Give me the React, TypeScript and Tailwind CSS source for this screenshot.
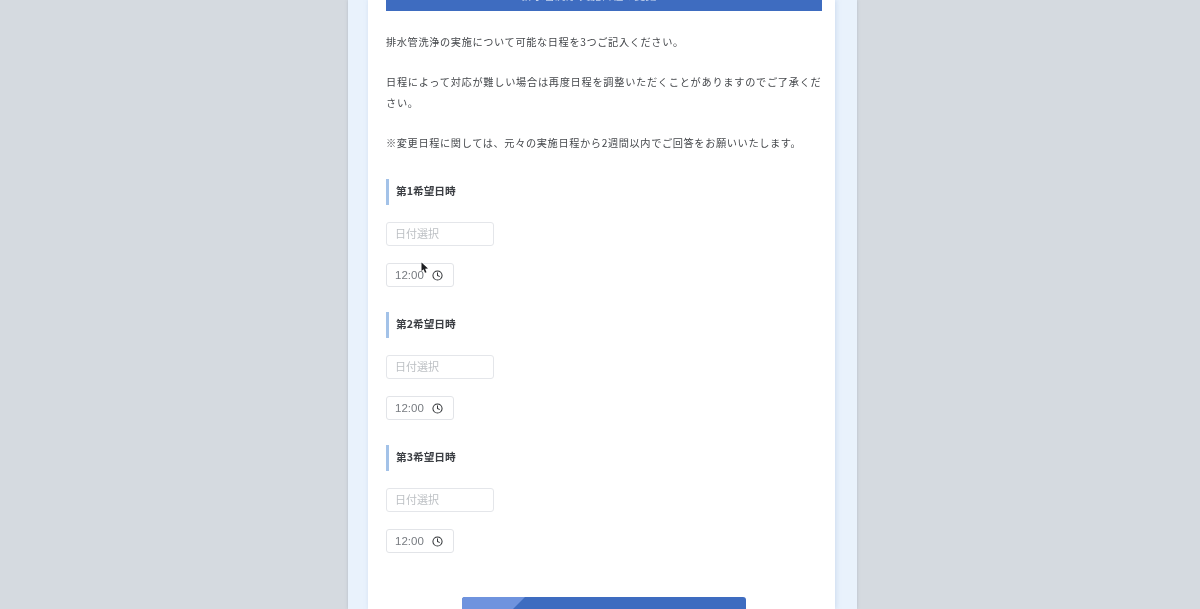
import { Clock } from "lucide-react";

const font = { fontFamily: '"Noto Sans CJK JP", "Noto Sans", sans-serif' };

function DateTimeBlock({ label }: { label: string }) {
  return (
    <div className="mb-[25px]">
      <div className="h-[26px] flex items-center border-l-[3px] border-[#a3c2e8] pl-[7px] pb-[2px] text-[10.7px] font-bold text-[#3c3f44]">
        {label}
      </div>
      <div className="mt-[17px] w-[108px] h-6 flex items-center border border-[#e4e6ea] rounded-[3px] pl-2 pb-[2px] text-[11px] text-[#bdc0c4]">
        日付選択
      </div>
      <div className="mt-[17px] w-[68px] h-6 flex items-center border border-[#e2e4e8] rounded-[3px] pl-2 text-[11.5px] text-[#777b80]">
        <span className="pt-[2px]" style={{ fontFamily: '"Liberation Sans", sans-serif' }}>12:00</span>
        <Clock size={11} strokeWidth={2.2} className="ml-2 text-[#333639]" />
      </div>
    </div>
  );
}

export default function App() {
  return (
    <div className="relative h-[609px] overflow-hidden bg-[#d5dae0] flex" style={font}>
      <div className="ml-[348px] w-[509px] h-full bg-[#e9f2fc] pl-5 pr-[22px] shadow-[0_0_3px_rgba(120,135,160,0.35)]">
        <div className="w-[467px] h-full bg-white px-[18px] pr-[13px] shadow-[1px_0_5px_rgba(150,175,215,0.35)] blur-[0.35px]">
          <div className="h-[11px] overflow-hidden bg-[#3e6cc0] flex items-start justify-center">
            <span className="text-[11px] leading-[14px] -translate-y-[12px] translate-x-[-15px] text-[#c6d4ee]">排水管洗浄 実施日程の変更</span>
          </div>

          <div className="mt-[21px] text-[10.2px] leading-5 tracking-[0.62px] text-[#45484c]">
            <p>排水管洗浄の実施について可能な日程を3つご記入ください。</p>
            <p className="mt-5 leading-[20.5px] tracking-[0.72px]">日程によって対応が難しい場合は再度日程を調整いただくことがありますのでご了承ください。</p>
            <p className="mt-5">※変更日程に関しては、元々の実施日程から2週間以内でご回答をお願いいたします。</p>
          </div>

          <div className="mt-[26px]">
            <DateTimeBlock label="第1希望日時" />
            <DateTimeBlock label="第2希望日時" />
            <DateTimeBlock label="第3希望日時" />
          </div>

          <div className="relative mt-11 ml-[76px] w-[284px] h-12 rounded-[3px] overflow-hidden bg-[#3e6cc0]">
            <div className="absolute inset-0 bg-[#6f93de] [clip-path:polygon(0_0,63px_0,15px_100%,0_100%)]" />
          </div>
        </div>
      </div>

      {/* mouse cursor */}
      <svg className="absolute left-[421px] top-[262px]" width="8" height="12" viewBox="0 0 8 12">
        <path d="M0.5 0.5 L0.5 9 L2.6 7.2 L4 10.8 L5.5 10.2 L4.1 6.8 L7 6.6 Z" fill="#1c1d20" />
      </svg>
    </div>
  );
}
